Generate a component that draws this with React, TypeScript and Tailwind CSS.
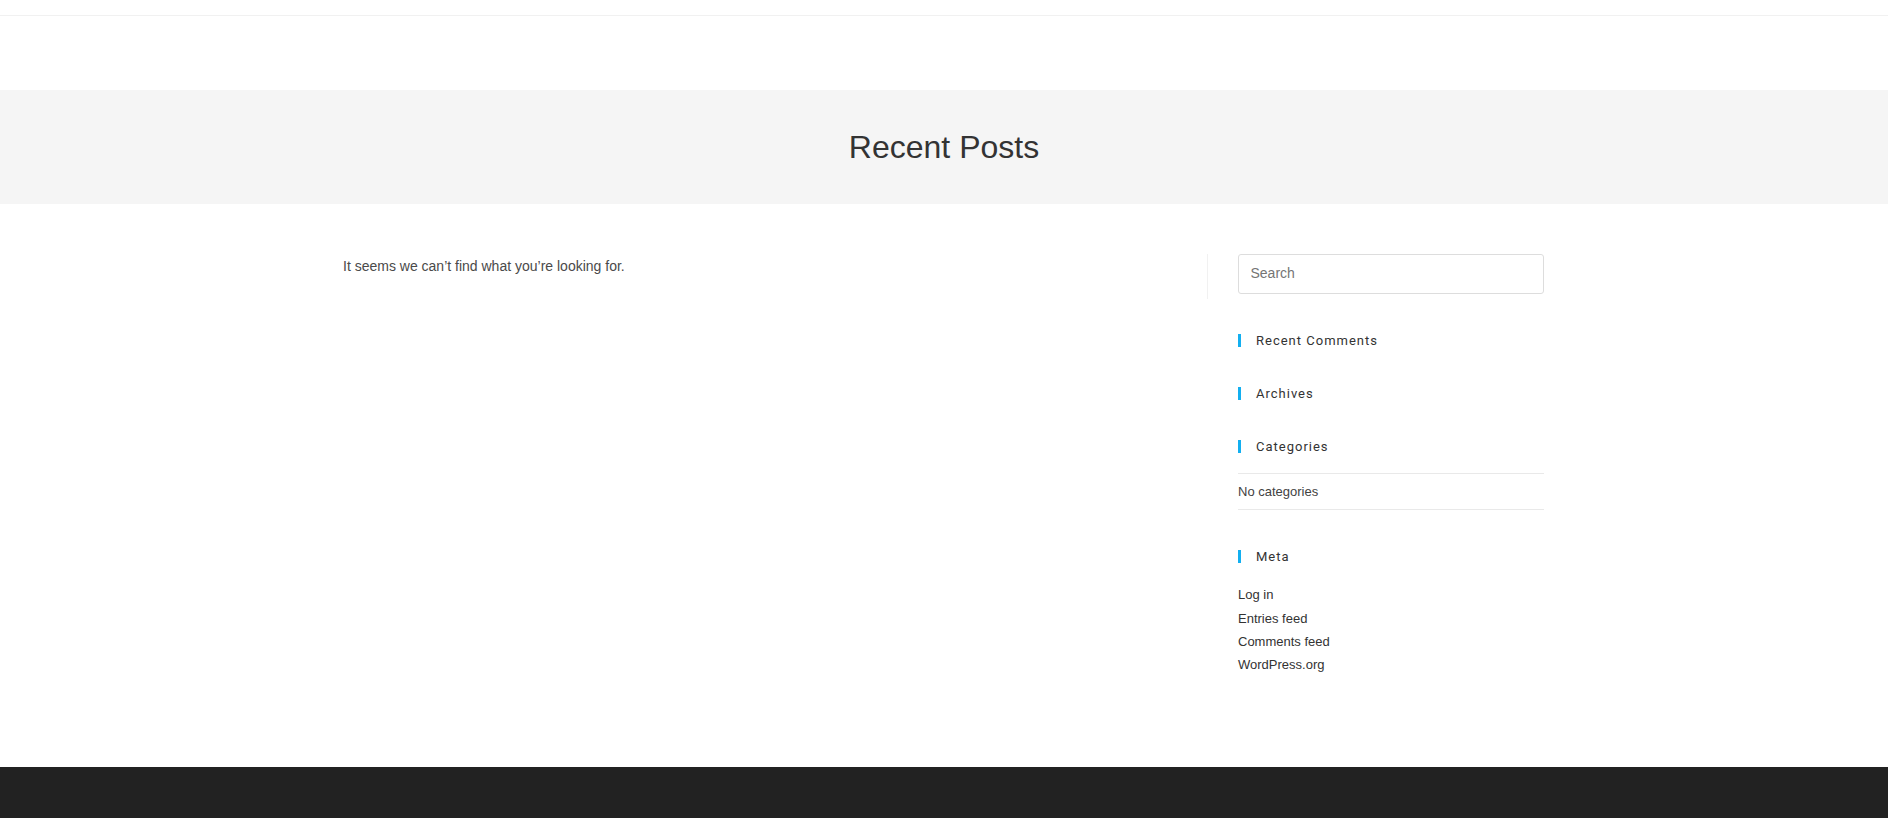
const metaLinks = ['Log in', 'Entries feed', 'Comments feed', 'WordPress.org'];

function WidgetTitle({ children }: { children: string }) {
  return (
    <h4 className="border-l-[3px] border-[#13aff0] pl-[15px] font-['Roboto',sans-serif] text-[13px] leading-[13px] font-normal tracking-[1px] text-[#333333]">
      {children}
    </h4>
  );
}

export default function App() {
  return (
    <div className="flex min-h-[818px] flex-col bg-white font-['Liberation_Sans',Arial,sans-serif]">
      <header className="h-4 border-b border-[#f1f1f1]" />

      <div className="mt-[74px] flex h-[114px] items-center justify-center bg-[#f5f5f5]">
        <h1 className="text-[32px] leading-[32px] font-normal text-[#333333]">Recent Posts</h1>
      </div>

      <main className="mx-auto flex w-[1200px] flex-1 pt-[50px]">
        <div className="h-[45px] w-[864px] border-r border-[#f1f1f1]">
          <p className="-ml-px text-sm leading-6 text-[#4a4a4a]">It seems we can&rsquo;t find what you&rsquo;re looking for.</p>
        </div>

        <aside className="w-[336px] pl-[30px]">
          <input
            type="text"
            placeholder="Search"
            className="h-10 w-full rounded-[3px] border border-[#dddddd] pr-3 pb-[2px] pl-[11.5px] text-sm text-[#333333] outline-none placeholder:text-[#757575]"
          />

          <div className="mt-10">
            <WidgetTitle>Recent Comments</WidgetTitle>
          </div>
          <div className="mt-10">
            <WidgetTitle>Archives</WidgetTitle>
          </div>
          <div className="mt-10">
            <WidgetTitle>Categories</WidgetTitle>
            <div className="mt-5 border-y border-[#e9e9e9] pt-[7px] pb-[6px] text-[13px] leading-[22px] text-[#424242]">
              No categories
            </div>
          </div>
          <div className="mt-[40px]">
            <WidgetTitle>Meta</WidgetTitle>
            <ul className="mt-[20.2px] text-[13px] leading-[23.4px] text-[#333333]">
              {metaLinks.map((link) => (
                <li key={link}>
                  <a href="#">{link}</a>
                </li>
              ))}
            </ul>
          </div>
        </aside>
      </main>

      <footer className="h-[51px] bg-[#222222]" />
    </div>
  );
}
